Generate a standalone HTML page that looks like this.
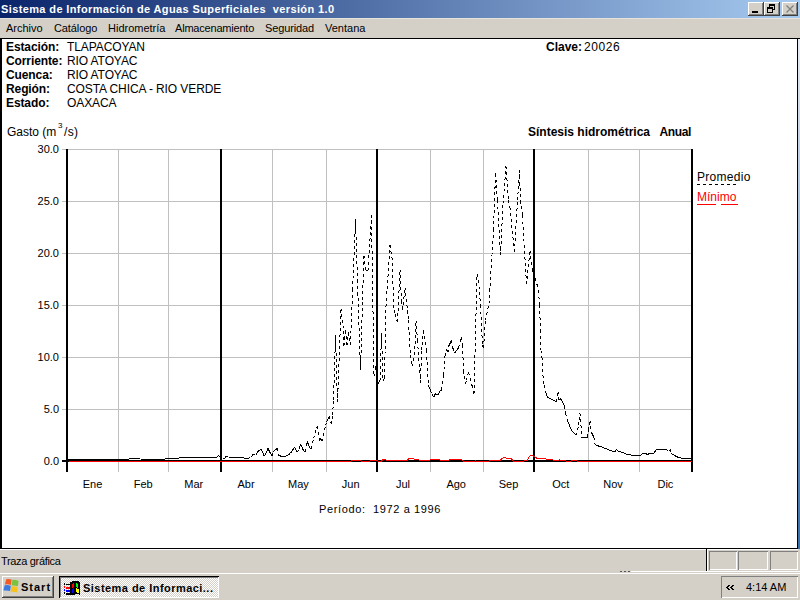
<!DOCTYPE html>
<html><head><meta charset="utf-8"><style>
html,body{margin:0;padding:0;width:800px;height:600px;overflow:hidden;background:#d4d0c8;position:relative;font-family:"Liberation Sans", sans-serif;}
.a{position:absolute;}
.t{position:absolute;white-space:nowrap;font-family:"Liberation Sans", sans-serif;}
.btn{position:absolute;width:16px;height:14px;background:#d4d0c8;box-shadow:inset -1px -1px #404040,inset 1px 1px #fff,inset -2px -2px #808080;}
</style></head><body>
<div class="a" style="left:0;top:0;width:800px;height:18px;background:linear-gradient(to right,#0a246a,#a6caf0);"></div>
<div class="a" style="left:0;top:18px;width:800px;height:1px;background:#e6e3dd;"></div>
<div class="btn" style="left:748px;top:2px;"><div class="a" style="left:4px;top:9px;width:6px;height:2px;background:#000"></div></div>
<div class="btn" style="left:764px;top:2px;">
  <div class="a" style="left:5px;top:2px;width:6px;height:5px;border:1px solid #000;border-top-width:2px;box-sizing:border-box;width:6px;height:6px;"></div>
  <div class="a" style="left:3px;top:5px;width:6px;height:6px;border:1px solid #000;border-top-width:2px;box-sizing:border-box;background:#d4d0c8"></div>
</div>
<div class="btn" style="left:782px;top:2px;"><svg class="a" style="left:0;top:0" width="16" height="14"><path d="M4.5 3.5L11.5 10.5M11.5 3.5L4.5 10.5" stroke="#808080" stroke-width="1.3"/></svg></div>
<div class="a" style="left:798px;top:39px;width:2px;height:510px;background:linear-gradient(#e8eef6,#3a6ea5);"></div>
<div class="a" style="left:0;top:38px;width:800px;height:1px;background:#000;"></div>
<div class="a" style="left:0;top:38px;width:798px;height:511px;background:#fff;box-sizing:border-box;border-left:2px solid #000;border-top:1px solid #000;border-right:1px solid #000;border-bottom:1px solid #000;"></div>
<svg class="a" style="left:0;top:0" width="800" height="600">
<rect x="62" y="461" width="629" height="1" fill="#c0c0c0"/>
<rect x="62" y="409" width="629" height="1" fill="#c0c0c0"/>
<rect x="62" y="357" width="629" height="1" fill="#c0c0c0"/>
<rect x="62" y="305" width="629" height="1" fill="#c0c0c0"/>
<rect x="62" y="253" width="629" height="1" fill="#c0c0c0"/>
<rect x="62" y="201" width="629" height="1" fill="#c0c0c0"/>
<rect x="62" y="149" width="629" height="1" fill="#c0c0c0"/>
<rect x="118" y="149" width="1" height="323" fill="#c0c0c0"/>
<rect x="168" y="149" width="1" height="323" fill="#c0c0c0"/>
<rect x="272" y="149" width="1" height="323" fill="#c0c0c0"/>
<rect x="326" y="149" width="1" height="323" fill="#c0c0c0"/>
<rect x="430" y="149" width="1" height="323" fill="#c0c0c0"/>
<rect x="483" y="149" width="1" height="323" fill="#c0c0c0"/>
<rect x="588" y="149" width="1" height="323" fill="#c0c0c0"/>
<rect x="639" y="149" width="1" height="323" fill="#c0c0c0"/>
<rect x="66" y="149" width="2" height="323" fill="#000"/>
<rect x="220" y="149" width="2" height="323" fill="#000"/>
<rect x="376" y="149" width="2" height="323" fill="#000"/>
<rect x="533" y="149" width="2" height="323" fill="#000"/>
<rect x="691" y="149" width="2" height="323" fill="#000"/>
<rect x="62" y="460" width="629" height="2" fill="#000"/>
<path d="M67.50 459.50L69.19 459.50 M69.19 459.50L70.89 459.50 M70.89 459.50L72.58 459.50 M72.58 459.50L74.28 459.50 M74.28 459.50L75.97 459.50 M75.97 459.50L77.67 459.50 M77.67 459.50L79.36 459.50 M79.36 459.50L81.06 459.50 M81.06 459.50L82.75 459.50 M82.75 459.50L84.44 459.50 M84.44 459.50L86.14 459.50 M86.14 459.50L87.83 459.50 M87.83 459.50L89.53 459.50 M89.53 459.50L91.22 459.50 M91.22 459.50L92.92 459.50 M92.92 459.50L94.61 459.50 M94.61 459.50L96.31 459.50 M96.31 459.50L98.00 459.50 M98.00 459.50L99.69 459.50 M99.69 459.50L101.39 459.50 M101.39 459.50L103.08 459.50 M103.08 459.50L104.78 459.50 M104.78 459.50L106.47 459.50 M106.47 459.50L108.17 459.50 M108.17 459.50L109.86 459.50 M109.86 459.50L111.56 459.50 M111.56 459.50L113.25 459.50 M113.25 459.50L114.94 459.50 M114.94 459.50L116.64 459.50 M116.64 459.50L118.33 459.50 M118.33 459.50L120.03 459.50 M120.03 459.50L121.72 459.50 M121.72 459.50L123.42 459.50 M123.42 459.50L125.11 459.50 M125.11 459.50L126.81 459.50 M126.81 459.50L128.50 459.50 M128.50 459.50L129.50 458.50 M129.50 458.50L131.17 458.50 M131.17 458.50L132.83 458.50 M132.83 458.50L134.50 458.50 M134.50 458.50L136.17 458.50 M136.17 458.50L137.83 458.50 M137.83 458.50L139.50 458.50 M139.50 458.50L140.50 459.50 M140.50 459.50L142.21 459.50 M142.21 459.50L143.93 459.50 M143.93 459.50L145.64 459.50 M145.64 459.50L147.36 459.50 M147.36 459.50L149.07 459.50 M149.07 459.50L150.79 459.50 M150.79 459.50L152.50 459.50 M152.50 459.50L154.21 459.50 M154.21 459.50L155.93 459.50 M155.93 459.50L157.64 459.50 M157.64 459.50L159.36 459.50 M159.36 459.50L161.07 459.50 M161.07 459.50L162.79 459.50 M162.79 459.50L164.50 459.50 M164.50 459.50L165.50 458.50 M165.50 458.50L167.12 458.50 M167.12 458.50L168.75 458.50 M168.75 458.50L170.38 458.50 M170.38 458.50L172.00 458.50 M172.00 458.50L173.62 458.50 M173.62 458.50L175.25 458.50 M175.25 458.50L176.88 458.50 M176.88 458.50L178.50 458.50 M178.50 458.50L179.50 457.50 M179.50 457.50L181.18 457.50 M181.18 457.50L182.86 457.50 M182.86 457.50L184.55 457.50 M184.55 457.50L186.23 457.50 M186.23 457.50L187.91 457.50 M187.91 457.50L189.59 457.50 M189.59 457.50L191.27 457.50 M191.27 457.50L192.95 457.50 M192.95 457.50L194.64 457.50 M194.64 457.50L196.32 457.50 M196.32 457.50L198.00 457.50 M198.00 457.50L199.68 457.50 M199.68 457.50L201.36 457.50 M201.36 457.50L203.05 457.50 M203.05 457.50L204.73 457.50 M204.73 457.50L206.41 457.50 M206.41 457.50L208.09 457.50 M208.09 457.50L209.77 457.50 M209.77 457.50L211.45 457.50 M211.45 457.50L213.14 457.50 M213.14 457.50L214.82 457.50 M214.82 457.50L216.50 457.50 M216.50 457.50L217.50 456.50 M217.50 456.50L218.50 455.50 M218.50 455.50L219.50 456.50 M219.50 456.50L220.50 457.50 M220.50 457.50L221.50 458.00 M221.50 458.00L222.50 458.50 M222.50 458.50L223.50 458.50 M223.50 458.50L224.50 458.50 M224.50 458.50L226.10 456.00 M226.10 456.00L227.30 456.75 M227.30 456.75L228.50 457.50 M228.50 457.50L230.21 457.50 M230.21 457.50L231.93 457.50 M231.93 457.50L233.64 457.50 M233.64 457.50L235.36 457.50 M235.36 457.50L237.07 457.50 M237.07 457.50L238.79 457.50 M238.79 457.50L240.50 457.50 M240.50 457.50L241.90 457.70 M241.90 457.70L243.30 457.90 M243.30 457.90L244.70 458.10 M244.70 458.10L246.10 458.30 M246.10 458.30L247.50 458.50 M247.50 458.50L249.00 458.00 M249.00 458.00L250.50 457.50 M250.50 457.50L252.00 455.75 M252.00 455.75L253.50 454.00 M253.50 454.00L254.50 454.75 M254.50 454.75L255.50 455.50 M255.50 455.50L256.75 453.50 M256.75 453.50L258.00 451.50 M258.00 451.50L259.50 450.25 M259.50 450.25L261.00 449.00 M261.00 449.00L262.17 451.50 M262.17 451.50L263.33 454.00 M263.33 454.00L264.50 456.50 M264.50 456.50L265.67 453.83 M265.67 453.83L266.83 451.17 M266.83 451.17L268.00 448.50 M268.00 448.50L269.50 451.50 M269.50 451.50L271.00 454.50 M271.00 454.50L272.00 455.50 M272.00 455.50L273.50 451.50 M273.50 451.50L274.67 450.50 M274.67 450.50L275.83 449.50 M275.83 449.50L277.00 448.50 M277.00 448.50L278.50 455.50 M278.50 455.50L279.83 455.83 M279.83 455.83L281.17 456.17 M281.17 456.17L282.50 456.50 M282.50 456.50L283.50 456.75 M283.50 456.75L284.50 457.00 M284.50 457.00L286.00 456.12 M286.00 456.12L287.50 455.25 M287.50 455.25L289.00 454.38 M289.00 454.38L290.50 453.50 M290.50 453.50L291.50 451.50 M291.50 451.50L293.00 449.50 M293.00 449.50L294.50 447.50 M294.50 447.50L295.50 449.00 M295.50 449.00L296.50 450.50 M296.50 450.50L297.50 452.50 M297.50 452.50L299.00 448.50 M299.00 448.50L300.50 444.50 M300.50 444.50L302.00 447.50 M302.00 447.50L303.50 450.50 M303.50 450.50L305.00 451.50 M305.00 451.50L307.50 441.50 M307.50 441.50L308.50 444.50 M308.50 444.50L309.50 447.50 M309.50 447.50L311.00 449.00 M311.00 449.00L313.50 438.50 M313.50 438.50L316.50 428.50 M316.50 428.50L317.50 426.00 M317.50 426.00L319.50 441.50 M319.50 441.50L320.50 438.50 M320.50 438.50L321.50 440.00 M321.50 440.00L322.50 441.50 M322.50 441.50L325.50 425.50 M325.50 425.50L326.75 422.00 M326.75 422.00L328.00 418.50 M328.00 418.50L329.50 416.50 M329.50 416.50L331.50 424.50 M331.50 424.50L332.50 415.50 M332.50 415.50L333.50 400.50 M333.50 400.50L335.50 335.50 M335.50 335.50L337.50 402.50 M337.50 402.50L341.00 308.50 M341.00 308.50L343.00 325.50 M343.00 325.50L344.00 345.50 M344.00 345.50L345.50 330.50 M345.50 330.50L347.00 345.50 M347.00 345.50L348.50 332.50 M348.50 332.50L350.50 345.50 M350.50 345.50L352.50 290.50 M352.50 290.50L355.50 219.50 M355.50 219.50L357.50 280.50 M357.50 280.50L360.50 370.50 M360.50 370.50L362.50 300.50 M362.50 300.50L364.00 255.50 M364.00 255.50L365.50 270.50 M365.50 270.50L366.75 270.50 M366.75 270.50L368.00 270.50 M368.00 270.50L371.50 215.50 M371.50 215.50L374.00 376.50 M374.00 376.50L375.50 366.50 M375.50 366.50L377.50 384.50 M377.50 384.50L378.75 382.50 M378.75 382.50L380.00 380.50 M380.00 380.50L381.50 333.50 M381.50 333.50L383.00 380.50 M383.00 380.50L384.50 378.50 M384.50 378.50L386.00 306.50 M386.00 306.50L390.00 245.50 M390.00 245.50L392.00 257.50 M392.00 257.50L394.00 310.50 M394.00 310.50L395.50 314.50 M395.50 314.50L397.50 322.50 M397.50 322.50L400.00 269.50 M400.00 269.50L401.50 300.50 M401.50 300.50L402.50 310.50 M402.50 310.50L405.00 287.50 M405.00 287.50L407.50 310.50 M407.50 310.50L408.50 320.50 M408.50 320.50L410.50 355.50 M410.50 355.50L412.50 366.50 M412.50 366.50L414.50 355.50 M414.50 355.50L416.00 320.50 M416.00 320.50L417.50 340.50 M417.50 340.50L420.50 383.50 M420.50 383.50L421.50 350.50 M421.50 350.50L423.50 330.50 M423.50 330.50L426.50 350.50 M426.50 350.50L428.50 385.50 M428.50 385.50L429.50 388.00 M429.50 388.00L430.50 390.50 M430.50 390.50L432.00 394.00 M432.00 394.00L433.50 397.50 M433.50 397.50L434.50 395.50 M434.50 395.50L435.50 393.50 M435.50 393.50L436.50 394.50 M436.50 394.50L437.50 395.50 M437.50 395.50L439.00 393.00 M439.00 393.00L440.50 390.50 M440.50 390.50L441.50 390.00 M441.50 390.00L443.50 375.50 M443.50 375.50L445.00 356.20 M445.00 356.20L446.50 349.50 M446.50 349.50L448.00 352.50 M448.00 352.50L449.00 345.50 M449.00 345.50L450.25 343.00 M450.25 343.00L451.50 340.50 M451.50 340.50L453.00 348.50 M453.00 348.50L454.50 353.30 M454.50 353.30L455.83 351.53 M455.83 351.53L457.17 349.77 M457.17 349.77L458.50 348.00 M458.50 348.00L461.50 336.90 M461.50 336.90L462.50 345.50 M462.50 345.50L463.50 370.50 M463.50 370.50L465.50 384.20 M465.50 384.20L466.50 380.50 M466.50 380.50L468.50 371.90 M468.50 371.90L470.50 378.50 M470.50 378.50L472.00 385.50 M472.00 385.50L474.00 394.10 M474.00 394.10L477.00 274.50 M477.00 274.50L478.50 280.50 M478.50 280.50L480.50 305.50 M480.50 305.50L482.50 345.50 M482.50 345.50L483.50 348.00 M483.50 348.00L485.50 320.50 M485.50 320.50L489.00 303.50 M489.00 303.50L493.50 230.50 M493.50 230.50L495.50 173.50 M495.50 173.50L497.50 200.50 M497.50 200.50L500.50 255.50 M500.50 255.50L503.00 203.50 M503.00 203.50L506.00 166.50 M506.00 166.50L508.50 200.50 M508.50 200.50L510.00 207.50 M510.00 207.50L514.50 252.50 M514.50 252.50L517.50 200.50 M517.50 200.50L519.50 170.50 M519.50 170.50L520.50 200.50 M520.50 200.50L522.50 215.50 M522.50 215.50L526.50 284.50 M526.50 284.50L530.00 250.50 M530.00 250.50L532.50 270.50 M532.50 270.50L534.00 274.50 M534.00 274.50L535.50 278.50 M535.50 278.50L538.50 290.50 M538.50 290.50L539.50 305.50 M539.50 305.50L540.50 330.50 M540.50 330.50L541.00 350.50 M541.00 350.50L542.00 357.50 M542.00 357.50L543.00 375.50 M543.00 375.50L544.00 385.50 M544.00 385.50L546.50 394.50 M546.50 394.50L547.50 397.20 M547.50 397.20L549.00 397.85 M549.00 397.85L550.50 398.50 M550.50 398.50L552.00 399.50 M552.00 399.50L553.50 400.50 M553.50 400.50L554.75 401.00 M554.75 401.00L556.00 401.50 M556.00 401.50L558.00 391.50 M558.00 391.50L558.50 400.50 M558.50 400.50L559.50 399.50 M559.50 399.50L560.50 398.50 M560.50 398.50L561.83 400.83 M561.83 400.83L563.17 403.17 M563.17 403.17L564.50 405.50 M564.50 405.50L565.50 413.50 M565.50 413.50L567.50 420.50 M567.50 420.50L568.50 423.00 M568.50 423.00L569.50 425.50 M569.50 425.50L570.50 428.00 M570.50 428.00L571.50 430.50 M571.50 430.50L573.00 432.00 M573.00 432.00L574.50 433.50 M574.50 433.50L575.50 434.50 M575.50 434.50L576.50 435.50 M576.50 435.50L578.50 425.50 M578.50 425.50L580.00 413.50 M580.00 413.50L581.00 425.50 M581.00 425.50L582.00 437.50 M582.00 437.50L583.38 437.50 M583.38 437.50L584.75 437.50 M584.75 437.50L586.12 437.50 M586.12 437.50L587.50 437.50 M587.50 437.50L588.50 430.50 M588.50 430.50L590.00 420.50 M590.00 420.50L591.50 432.50 M591.50 432.50L592.75 435.00 M592.75 435.00L594.00 437.50 M594.00 437.50L594.50 443.50 M594.50 443.50L595.50 444.50 M595.50 444.50L596.50 445.50 M596.50 445.50L597.83 445.83 M597.83 445.83L599.17 446.17 M599.17 446.17L600.50 446.50 M600.50 446.50L602.17 447.17 M602.17 447.17L603.83 447.83 M603.83 447.83L605.50 448.50 M605.50 448.50L607.17 449.17 M607.17 449.17L608.83 449.83 M608.83 449.83L610.50 450.50 M610.50 450.50L611.83 451.00 M611.83 451.00L613.17 451.50 M613.17 451.50L614.50 452.00 M614.50 452.00L615.50 450.75 M615.50 450.75L616.50 449.50 M616.50 449.50L617.50 450.50 M617.50 450.50L618.50 451.50 M618.50 451.50L620.17 451.83 M620.17 451.83L621.83 452.17 M621.83 452.17L623.50 452.50 M623.50 452.50L625.00 453.50 M625.00 453.50L626.50 454.50 M626.50 454.50L627.83 454.67 M627.83 454.67L629.17 454.83 M629.17 454.83L630.50 455.00 M630.50 455.00L632.07 455.07 M632.07 455.07L633.64 455.14 M633.64 455.14L635.21 455.21 M635.21 455.21L636.79 455.29 M636.79 455.29L638.36 455.36 M638.36 455.36L639.93 455.43 M639.93 455.43L641.50 455.50 M641.50 455.50L642.50 453.00 M642.50 453.00L644.00 453.00 M644.00 453.00L645.50 453.00 M645.50 453.00L646.50 454.00 M646.50 454.00L647.50 455.00 M647.50 455.00L648.50 454.00 M648.50 454.00L649.50 453.00 M649.50 453.00L651.00 453.00 M651.00 453.00L652.50 453.00 M652.50 453.00L654.00 453.00 M654.00 453.00L655.25 451.00 M655.25 451.00L656.50 449.00 M656.50 449.00L658.00 449.00 M658.00 449.00L659.50 449.00 M659.50 449.00L661.00 449.00 M661.00 449.00L662.50 449.00 M662.50 449.00L664.00 449.00 M664.00 449.00L665.50 449.00 M665.50 449.00L667.00 450.25 M667.00 450.25L668.50 451.50 M668.50 451.50L669.50 450.50 M669.50 450.50L670.50 449.50 M670.50 449.50L671.50 453.50 M671.50 453.50L673.00 454.50 M673.00 454.50L674.50 455.50 M674.50 455.50L675.83 456.17 M675.83 456.17L677.17 456.83 M677.17 456.83L678.50 457.50 M678.50 457.50L679.50 457.75 M679.50 457.75L680.50 458.00 M680.50 458.00L682.07 458.00 M682.07 458.00L683.64 458.00 M683.64 458.00L685.21 458.00 M685.21 458.00L686.79 458.00 M686.79 458.00L688.36 458.00 M688.36 458.00L689.93 458.00 M689.93 458.00L691.50 458.00" stroke="#000" stroke-width="1" fill="none" stroke-dasharray="3 3" shape-rendering="crispEdges"/>
<path d="M68.5 461.5 L350.5 461.5 L351.5 460.5 L360.5 460.5 L361.5 461.5 L369.5 461.5 L370.5 460.5 L377.5 460.5 L378.5 461.5 L381.5 461.5 L382.5 459.5 L385.5 459.5 L386.5 460.5 L407.5 460.5 L408.5 458.5 L413.5 458.5 L414.5 459.5 L418.5 459.5 L419.5 460.5 L429.5 460.5 L430.5 459.5 L439.5 459.5 L440.5 460.5 L448.5 460.5 L449.5 459.5 L461.5 459.5 L462.5 460.5 L463.5 461.5 L474.5 461.5 L475.5 460.5 L476.5 461.5 L488.5 461.5 L489.5 460.5 L500.5 460.5 L501.5 458.5 L504.5 457.5 L507.5 458.5 L511.5 458.5 L512.5 460.5 L513.5 461.5 L523.5 461.5 L524.5 460.5 L527.5 460.5 L528.5 457.5 L530.5 455.5 L532.5 455.5 L535.5 457.5 L537.5 458.5 L545.5 458.5 L546.5 459.5 L552.5 459.5 L553.5 460.5 L558.5 460.5 L559.5 459.5 L560.5 460.5 L565.5 460.5 L566.5 461.5 L570.5 461.5 L571.5 460.5 L576.5 460.5 L577.5 461.5 L691.5 461.5" stroke="#ff0000" stroke-width="1" fill="none" shape-rendering="crispEdges"/>
<path d="M697 184.5H737" stroke="#000" stroke-width="1" stroke-dasharray="3 3" shape-rendering="crispEdges"/>
<rect x="697" y="204" width="19" height="1" fill="#ff0000"/><rect x="721" y="204" width="17" height="1" fill="#ff0000"/>
</svg>
<div class="a" style="left:0;top:549px;width:798px;height:1px;background:#fff;"></div>
<div class="a" style="left:706px;top:548px;width:1px;height:23px;background:#000;"></div>
<div class="a" style="left:707px;top:549px;width:1px;height:22px;background:#fff;"></div>
<div class="a" style="left:709px;top:551px;width:28px;height:19px;box-shadow:inset 1px 1px #808080,inset -1px -1px #fff;"></div>
<div class="a" style="left:738px;top:551px;width:30px;height:19px;box-shadow:inset 1px 1px #808080,inset -1px -1px #fff;"></div>
<div class="a" style="left:770px;top:551px;width:28px;height:19px;box-shadow:inset 1px 1px #808080,inset -1px -1px #fff;"></div>
<div class="a" style="left:631px;top:571px;width:169px;height:1px;background:#fff;"></div>
<div class="a" style="left:620px;top:571px;width:2px;height:1px;background:#555;"></div>
<div class="a" style="left:624px;top:571px;width:2px;height:1px;background:#555;"></div>
<div class="a" style="left:628px;top:571px;width:2px;height:1px;background:#555;"></div>
<div class="a" style="left:0;top:573px;width:800px;height:1px;background:#fff;"></div>
<div class="a" style="left:2px;top:576px;width:52px;height:22px;background:#d4d0c8;box-shadow:inset -1px -1px #404040,inset 1px 1px #fff,inset -2px -2px #808080;"></div>
<svg class="a" style="left:0;top:570px" width="24" height="30">
 <path d="M6.2 9.2 Q9 8.6 11.6 9.6 L10.9 14.9 Q8 14 4.9 14.6Z" fill="#f25a26"/>
 <path d="M12.3 9.9 Q15.5 9.6 18.6 10.9 L17.9 16.3 Q14.8 15.2 11.6 15.6Z" fill="#7cc23f"/>
 <path d="M4.7 15.3 Q7.8 14.8 10.8 15.7 L10.1 21 Q6.8 20 3.4 20.6Z" fill="#3b7be0"/>
 <path d="M11.4 16.3 Q14.6 16 17.8 17 L17.1 22.6 Q13.8 21.4 10.6 21.8Z" fill="#f8c21c"/>
</svg>
<div class="a" style="left:59px;top:576px;width:160px;height:22px;background-color:#e8e6e1;background-image:repeating-conic-gradient(#fff 0 25%,#d4d0c8 0 50%);background-size:2px 2px;box-shadow:inset 1px 1px #000,inset -1px -1px #fff,inset 2px 2px #808080;"></div>
<svg class="a" style="left:61px;top:578px" width="22" height="20" shape-rendering="crispEdges">
 <rect x="3" y="5" width="1" height="2" fill="#000"/><rect x="3" y="8" width="1" height="2" fill="#f00"/><rect x="3" y="11" width="1" height="2" fill="#00f"/><rect x="3" y="14" width="1" height="2" fill="#000"/>
 <rect x="5" y="6" width="4" height="1" fill="#000"/><rect x="5" y="9" width="4" height="2" fill="#f00"/><rect x="5" y="12" width="4" height="2" fill="#00f"/><rect x="5" y="15" width="4" height="2" fill="#000"/>
 <path d="M9 4 L12 3 L16 3 L19 4 L19 17 L16 16 L12 17 L9 17 Z" fill="#000"/>
 <path d="M10.5 6 L13 5 L13 9 L10.5 10Z" fill="#f00"/>
 <path d="M15 5 L17 6 L17 10 L15 9Z" fill="#0f0"/>
 <path d="M10.5 11 L13 10 L13 14 L10.5 15Z" fill="#00f"/>
 <path d="M15 10 L17.5 11 L17.5 15 L15 14Z" fill="#ff0"/>
</svg>
<div class="a" style="left:721px;top:576px;width:77px;height:22px;box-shadow:inset 1px 1px #808080,inset -1px -1px #fff;"></div>
<svg class="a" style="left:722px;top:580px" width="16" height="14" shape-rendering="crispEdges"><path d="M6 5h2v1h-2zM5 6h2v1h-2zM4 7h2v1h-2zM5 8h2v1h-2zM6 9h2v1h-2zM10 5h2v1h-2zM9 6h2v1h-2zM8 7h2v1h-2zM9 8h2v1h-2zM10 9h2v1h-2z" fill="#000"/></svg>
<div class="t" style="left:1px;top:3.69px;font-size:11px;line-height:11px;color:#fff;font-weight:bold;letter-spacing:0.38px;">Sistema de Información de Aguas Superficiales&nbsp; versión 1.0</div>
<div class="t" style="left:6px;top:22.69px;font-size:11px;line-height:11px;color:#000;">Archivo</div>
<div class="t" style="left:54px;top:22.69px;font-size:11px;line-height:11px;color:#000;letter-spacing:-0.1px;">Catálogo</div>
<div class="t" style="left:108px;top:22.69px;font-size:11px;line-height:11px;color:#000;">Hidrometría</div>
<div class="t" style="left:175px;top:22.69px;font-size:11px;line-height:11px;color:#000;letter-spacing:-0.2px;">Almacenamiento</div>
<div class="t" style="left:265px;top:22.69px;font-size:11px;line-height:11px;color:#000;letter-spacing:-0.12px;">Seguridad</div>
<div class="t" style="left:325px;top:22.69px;font-size:11px;line-height:11px;color:#000;">Ventana</div>
<div class="t" style="left:6px;top:40.84px;font-size:12px;line-height:12px;color:#000;font-weight:bold;letter-spacing:-0.1px;">Estación:</div>
<div class="t" style="left:67px;top:40.84px;font-size:12px;line-height:12px;color:#000;letter-spacing:-0.1px;">TLAPACOYAN</div>
<div class="t" style="left:6px;top:54.84px;font-size:12px;line-height:12px;color:#000;font-weight:bold;letter-spacing:-0.1px;">Corriente:</div>
<div class="t" style="left:67px;top:54.84px;font-size:12px;line-height:12px;color:#000;letter-spacing:-0.1px;">RIO ATOYAC</div>
<div class="t" style="left:6px;top:68.84px;font-size:12px;line-height:12px;color:#000;font-weight:bold;letter-spacing:-0.1px;">Cuenca:</div>
<div class="t" style="left:67px;top:68.84px;font-size:12px;line-height:12px;color:#000;letter-spacing:-0.1px;">RIO ATOYAC</div>
<div class="t" style="left:6px;top:82.84px;font-size:12px;line-height:12px;color:#000;font-weight:bold;letter-spacing:-0.1px;">Región:</div>
<div class="t" style="left:67px;top:82.84px;font-size:12px;line-height:12px;color:#000;letter-spacing:-0.1px;">COSTA CHICA - RIO VERDE</div>
<div class="t" style="left:6px;top:96.84px;font-size:12px;line-height:12px;color:#000;font-weight:bold;letter-spacing:-0.1px;">Estado:</div>
<div class="t" style="left:67px;top:96.84px;font-size:12px;line-height:12px;color:#000;letter-spacing:-0.1px;">OAXACA</div>
<div class="t" style="left:546px;top:40.84px;font-size:12px;line-height:12px;color:#000;font-weight:bold;">Clave:</div>
<div class="t" style="left:584px;top:40.84px;font-size:12px;line-height:12px;color:#000;letter-spacing:0.6px;">20026</div>
<div class="t" style="left:7px;top:126.34px;font-size:12px;line-height:12px;color:#000;">Gasto (m</div>
<div class="t" style="left:58px;top:122.23px;font-size:8px;line-height:8px;color:#000;">3</div>
<div class="t" style="left:64px;top:126.34px;font-size:12px;line-height:12px;color:#000;letter-spacing:0.3px;">/s)</div>
<div class="t" style="left:528px;top:126.34px;font-size:12px;line-height:12px;color:#000;font-weight:bold;">Síntesis hidrométrica</div>
<div class="t" style="left:659.5px;top:126.34px;font-size:12px;line-height:12px;color:#000;font-weight:bold;letter-spacing:-0.4px;">Anual</div>
<div class="t" style="left:697px;top:170.84px;font-size:12px;line-height:12px;color:#000;letter-spacing:0.3px;">Promedio</div>
<div class="t" style="left:697px;top:190.84px;font-size:12px;line-height:12px;color:#ff0000;">Mínimo</div>
<div class="t" style="left:0px;top:455.69px;font-size:11px;line-height:11px;color:#000;width:59px;text-align:right;">0.0</div>
<div class="t" style="left:0px;top:403.69px;font-size:11px;line-height:11px;color:#000;width:59px;text-align:right;">5.0</div>
<div class="t" style="left:0px;top:351.69px;font-size:11px;line-height:11px;color:#000;width:59px;text-align:right;">10.0</div>
<div class="t" style="left:0px;top:299.69px;font-size:11px;line-height:11px;color:#000;width:59px;text-align:right;">15.0</div>
<div class="t" style="left:0px;top:247.69px;font-size:11px;line-height:11px;color:#000;width:59px;text-align:right;">20.0</div>
<div class="t" style="left:0px;top:195.69px;font-size:11px;line-height:11px;color:#000;width:59px;text-align:right;">25.0</div>
<div class="t" style="left:0px;top:143.69px;font-size:11px;line-height:11px;color:#000;width:59px;text-align:right;">30.0</div>
<div class="t" style="left:62.58356164383562px;top:478.69px;font-size:11px;line-height:11px;color:#000;width:60px;text-align:center;">Ene</div>
<div class="t" style="left:113.17808219178082px;top:478.69px;font-size:11px;line-height:11px;color:#000;width:60px;text-align:center;">Feb</div>
<div class="t" style="left:163.77260273972604px;top:478.69px;font-size:11px;line-height:11px;color:#000;width:60px;text-align:center;">Mar</div>
<div class="t" style="left:216.08219178082192px;top:478.69px;font-size:11px;line-height:11px;color:#000;width:60px;text-align:center;">Abr</div>
<div class="t" style="left:268.3917808219178px;top:478.69px;font-size:11px;line-height:11px;color:#000;width:60px;text-align:center;">May</div>
<div class="t" style="left:320.7013698630137px;top:478.69px;font-size:11px;line-height:11px;color:#000;width:60px;text-align:center;">Jun</div>
<div class="t" style="left:373.01095890410954px;top:478.69px;font-size:11px;line-height:11px;color:#000;width:60px;text-align:center;">Jul</div>
<div class="t" style="left:426.17808219178085px;top:478.69px;font-size:11px;line-height:11px;color:#000;width:60px;text-align:center;">Ago</div>
<div class="t" style="left:478.4876712328768px;top:478.69px;font-size:11px;line-height:11px;color:#000;width:60px;text-align:center;">Sep</div>
<div class="t" style="left:530.7972602739726px;top:478.69px;font-size:11px;line-height:11px;color:#000;width:60px;text-align:center;">Oct</div>
<div class="t" style="left:583.1068493150685px;top:478.69px;font-size:11px;line-height:11px;color:#000;width:60px;text-align:center;">Nov</div>
<div class="t" style="left:635.4164383561645px;top:478.69px;font-size:11px;line-height:11px;color:#000;width:60px;text-align:center;">Dic</div>
<div class="t" style="left:319px;top:503.69px;font-size:11px;line-height:11px;color:#000;letter-spacing:0.63px;">Período:&nbsp; 1972 a 1996</div>
<div class="t" style="left:1px;top:555.69px;font-size:11px;line-height:11px;color:#000;letter-spacing:-0.33px;">Traza gráfica</div>
<div class="t" style="left:21px;top:581.69px;font-size:11px;line-height:11px;color:#000;font-weight:bold;letter-spacing:1.0px;">Start</div>
<div class="t" style="left:83px;top:582.69px;font-size:11px;line-height:11px;color:#000;font-weight:bold;letter-spacing:0.46px;">Sistema de Informaci...</div>
<div class="t" style="left:746px;top:581.69px;font-size:11px;line-height:11px;color:#000;">4:14 AM</div>
</body></html>
